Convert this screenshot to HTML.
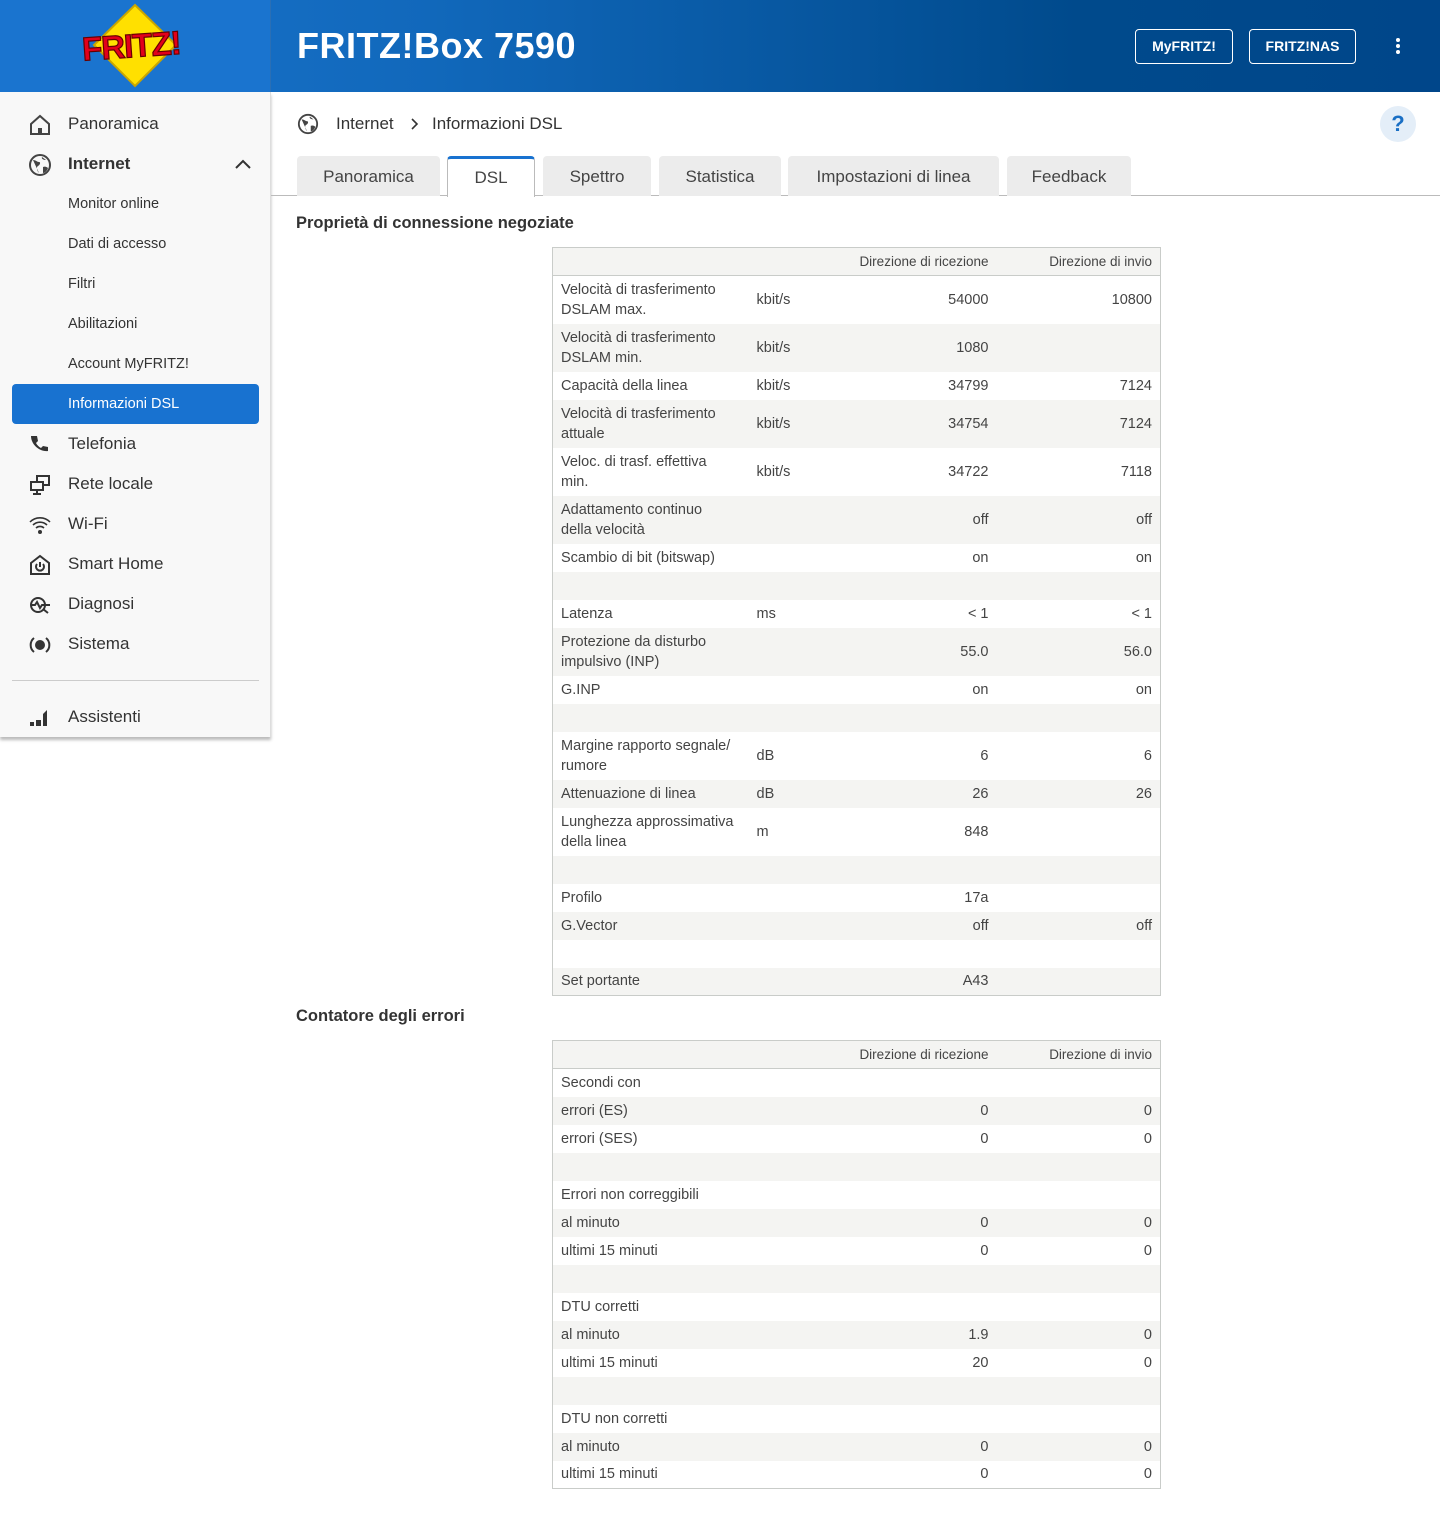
<!DOCTYPE html>
<html><head><meta charset="utf-8"><style>
*{box-sizing:border-box;margin:0;padding:0}
body{width:1440px;height:1514px;position:relative;font-family:"Liberation Sans",sans-serif;color:#444;background:#fff;overflow:hidden}
.hdr{position:absolute;left:0;top:0;width:1440px;height:92px;background:linear-gradient(90deg,#1a74cd 0%,#1168bb 30%,#004a8c 75%,#00468a 100%)}
.logo{position:absolute;left:0;top:0;width:271px;height:92px;background:#1a74cf;border-right:1px solid #2a6fb5}
.title{position:absolute;left:297px;top:25px;color:#fff;font-size:36px;font-weight:bold;letter-spacing:.5px}
.btn{position:absolute;top:29px;height:35px;border:1px solid #fff;border-radius:4px;color:#fff;font-size:14px;font-weight:bold;text-align:center;line-height:33px}
.side{position:absolute;left:0;top:92px;width:271px;height:645px;background:#f8f8f8;border-right:1px solid #ddd;box-shadow:0 3px 3px #bbb}
.ni{position:absolute;left:68px;font-size:17px;color:#333}
.sub{position:absolute;left:68px;font-size:14.5px;color:#333}
.ico{position:absolute;left:28px;width:24px;height:24px}
.tab{position:absolute;top:156px;height:40px;background:#ececec;border-radius:4px 4px 0 0;font-size:17px;color:#444;text-align:center;line-height:42px}
h2{position:absolute;left:296px;font-size:16.5px;font-weight:bold;color:#333}
table{position:absolute;left:552px;width:608px;border:1px solid #c9ccc9;border-collapse:collapse;font-size:14.5px;color:#444;table-layout:fixed}
td{padding:0 8px;vertical-align:middle;line-height:20px;white-space:nowrap;overflow:hidden}
tr.h td{height:28px;font-size:13.5px;border-bottom:1px solid #c9ccc9;background:#f4f4f2;line-height:27px}
tr.s td{height:28px}tr.d td{height:48px}
tr:nth-child(odd):not(.h) td{background:#f4f4f2}
td.r{text-align:right}
</style></head><body>
<div class="hdr"></div>
<div class="logo">
<svg width="120" height="92" viewBox="0 0 120 92" style="position:absolute;left:77px;top:0">
<polygon points="58,5 99,45 58,86 17,45" fill="#ffe000" stroke="#c9a500" stroke-width="2"/>
<text x="5" y="57" font-family="Liberation Sans" font-weight="bold" font-size="33" fill="#e2001a" stroke="#600" stroke-width="1.2" transform="rotate(-4 58 45)" letter-spacing="-1">FRITZ!</text>
</svg></div>
<div class="title">FRITZ!Box 7590</div>
<div class="btn" style="left:1135px;width:98px">MyFRITZ!</div>
<div class="btn" style="left:1249px;width:107px">FRITZ!NAS</div>
<div style="position:absolute;left:1396px;top:38px;width:4px">
<div style="width:4px;height:4px;background:#fff;border-radius:2px;margin-bottom:2px"></div><div style="width:4px;height:4px;background:#fff;border-radius:2px;margin-bottom:2px"></div><div style="width:4px;height:4px;background:#fff;border-radius:2px"></div></div>

<div class="side">
<svg class="ico" style="top:21px" viewBox="0 0 24 24"><path d="M3 11L12 3l9 8v10H3z" fill="none" stroke="#444" stroke-width="2"/><rect x="10" y="15" width="4" height="6" fill="#444"/></svg>
<div class="ni" style="top:22px">Panoramica</div>
<svg class="ico" style="top:61px" viewBox="0 0 24 24"><circle cx="12" cy="12" r="10" fill="none" stroke="#444" stroke-width="2"/><path d="M5 7c3 0 4 2 6 2s1 3-1 4-1 5 1 7M14 4c-1 2 2 3 4 3M15 14c2-1 4 0 5 1-1 3-3 5-5 5z" fill="#444"/></svg>
<div class="ni" style="top:62px;font-weight:bold">Internet</div>
<svg style="position:absolute;left:234px;top:66px" width="18" height="12" viewBox="0 0 18 12"><path d="M2 10l7-7 7 7" fill="none" stroke="#333" stroke-width="2"/></svg>
<div class="sub" style="top:104px">Monitor online</div>
<div class="sub" style="top:144px">Dati di accesso</div>
<div class="sub" style="top:184px">Filtri</div>
<div class="sub" style="top:224px">Abilitazioni</div>
<div class="sub" style="top:264px">Account MyFRITZ!</div>
<div style="position:absolute;left:12px;top:292px;width:247px;height:40px;background:#1872d0;border-radius:4px"></div>
<div class="sub" style="top:304px;color:#fff">Informazioni DSL</div>
<svg class="ico" style="top:341px" viewBox="0 0 24 24"><path d="M5 3l4 0 1 5-2 2c1 2 3 4 5 5l2-2 5 1v4c-9 1-17-7-17-15z" fill="#333"/></svg>
<div class="ni" style="top:342px">Telefonia</div>
<svg class="ico" style="top:381px" viewBox="0 0 24 24"><rect x="9" y="3" width="12" height="9" fill="none" stroke="#333" stroke-width="2"/><rect x="3" y="9" width="12" height="8" fill="#f8f8f8" stroke="#333" stroke-width="2"/><path d="M9 17v3M5 21h8" stroke="#333" stroke-width="2"/></svg>
<div class="ni" style="top:382px">Rete locale</div>
<svg class="ico" style="top:421px" viewBox="0 0 24 24"><path d="M2 9a14 14 0 0 1 20 0M5 12a10 10 0 0 1 14 0M8 15a6 6 0 0 1 8 0" fill="none" stroke="#333" stroke-width="1.6"/><circle cx="12" cy="19" r="2" fill="#333"/></svg>
<div class="ni" style="top:422px">Wi-Fi</div>
<svg class="ico" style="top:461px" viewBox="0 0 24 24"><path d="M3 10l9-7 9 7v11H3z" fill="none" stroke="#333" stroke-width="2"/><path d="M9 11a4 4 0 1 0 6 0M12 9v5" fill="none" stroke="#333" stroke-width="2"/></svg>
<div class="ni" style="top:462px">Smart Home</div>
<svg class="ico" style="top:501px" viewBox="0 0 24 24"><circle cx="10" cy="12" r="7" fill="none" stroke="#333" stroke-width="2"/><path d="M3 12h4l2-3 3 6 2-3h8M15 16l5 4" fill="none" stroke="#333" stroke-width="2"/></svg>
<div class="ni" style="top:502px">Diagnosi</div>
<svg class="ico" style="top:541px" viewBox="0 0 24 24"><path d="M6 5a9 9 0 0 0 0 14M18 5a9 9 0 0 1 0 14" fill="none" stroke="#333" stroke-width="2"/><circle cx="12" cy="12" r="5" fill="#333"/></svg>
<div class="ni" style="top:542px">Sistema</div>
<div style="position:absolute;left:12px;top:588px;width:247px;height:1px;background:#ccc"></div>
<svg class="ico" style="top:614px" viewBox="0 0 24 24"><path d="M2 16h4v4H2zM8 14h5v6H8zM15 8l4-4v16h-4z" fill="#333"/></svg>
<div class="ni" style="top:615px">Assistenti</div>
</div>

<svg style="position:absolute;left:297px;top:113px" width="22" height="22" viewBox="0 0 24 24"><circle cx="12" cy="12" r="10" fill="none" stroke="#444" stroke-width="2"/><path d="M5 7c3 0 4 2 6 2s1 3-1 4-1 5 1 7M14 4c-1 2 2 3 4 3M15 14c2-1 4 0 5 1-1 3-3 5-5 5z" fill="#444"/></svg>
<div style="position:absolute;left:336px;top:114px;font-size:17px;color:#333">Internet</div>
<svg style="position:absolute;left:410px;top:118px" width="10" height="12" viewBox="0 0 10 12"><path d="M2 1l5 5-5 5" fill="none" stroke="#333" stroke-width="1.6"/></svg>
<div style="position:absolute;left:432px;top:114px;font-size:17px;color:#333">Informazioni DSL</div>
<div style="position:absolute;left:1380px;top:106px;width:36px;height:36px;border-radius:18px;background:#e4eef8;color:#1a6fc4;font-weight:bold;font-size:22px;text-align:center;line-height:36px">?</div>

<div style="position:absolute;left:271px;top:195px;width:1169px;height:1px;background:#bbb"></div>
<div class="tab" style="left:297px;width:143px">Panoramica</div>
<div class="tab" style="left:447px;width:88px;background:#fff;border:1px solid #bbb;border-bottom:none;border-top:3px solid #1872d0;height:41px;line-height:38px">DSL</div>
<div class="tab" style="left:543px;width:108px">Spettro</div>
<div class="tab" style="left:659px;width:122px">Statistica</div>
<div class="tab" style="left:788px;width:211px">Impostazioni di linea</div>
<div class="tab" style="left:1007px;width:124px">Feedback</div>

<h2 style="top:214px">Proprietà di connessione negoziate</h2>
<table style="top:247px">
<colgroup><col style="width:196px"><col style="width:100px"><col style="width:148px"><col style="width:164px"></colgroup>
<tr class="h"><td></td><td></td><td class="r">Direzione di ricezione</td><td class="r">Direzione di invio</td></tr>
<tr class="d"><td>Velocità di trasferimento<br>DSLAM max.</td><td>kbit/s</td><td class="r">54000</td><td class="r">10800</td></tr>
<tr class="d"><td>Velocità di trasferimento<br>DSLAM min.</td><td>kbit/s</td><td class="r">1080</td><td class="r"></td></tr>
<tr class="s"><td>Capacità della linea</td><td>kbit/s</td><td class="r">34799</td><td class="r">7124</td></tr>
<tr class="d"><td>Velocità di trasferimento<br>attuale</td><td>kbit/s</td><td class="r">34754</td><td class="r">7124</td></tr>
<tr class="d"><td>Veloc. di trasf. effettiva<br>min.</td><td>kbit/s</td><td class="r">34722</td><td class="r">7118</td></tr>
<tr class="d"><td>Adattamento continuo<br>della velocità</td><td></td><td class="r">off</td><td class="r">off</td></tr>
<tr class="s"><td>Scambio di bit (bitswap)</td><td></td><td class="r">on</td><td class="r">on</td></tr>
<tr class="s"><td></td><td></td><td></td><td></td></tr>
<tr class="s"><td>Latenza</td><td>ms</td><td class="r">&lt; 1</td><td class="r">&lt; 1</td></tr>
<tr class="d"><td>Protezione da disturbo<br>impulsivo (INP)</td><td></td><td class="r">55.0</td><td class="r">56.0</td></tr>
<tr class="s"><td>G.INP</td><td></td><td class="r">on</td><td class="r">on</td></tr>
<tr class="s"><td></td><td></td><td></td><td></td></tr>
<tr class="d"><td>Margine rapporto segnale/<br>rumore</td><td>dB</td><td class="r">6</td><td class="r">6</td></tr>
<tr class="s"><td>Attenuazione di linea</td><td>dB</td><td class="r">26</td><td class="r">26</td></tr>
<tr class="d"><td>Lunghezza approssimativa<br>della linea</td><td>m</td><td class="r">848</td><td class="r"></td></tr>
<tr class="s"><td></td><td></td><td></td><td></td></tr>
<tr class="s"><td>Profilo</td><td></td><td class="r">17a</td><td class="r"></td></tr>
<tr class="s"><td>G.Vector</td><td></td><td class="r">off</td><td class="r">off</td></tr>
<tr class="s"><td></td><td></td><td></td><td></td></tr>
<tr class="s"><td>Set portante</td><td></td><td class="r">A43</td><td class="r"></td></tr>
</table>

<h2 style="top:1007px">Contatore degli errori</h2>
<table style="top:1040px">
<colgroup><col style="width:196px"><col style="width:100px"><col style="width:148px"><col style="width:164px"></colgroup>
<tr class="h"><td></td><td></td><td class="r">Direzione di ricezione</td><td class="r">Direzione di invio</td></tr>
<tr class="s"><td>Secondi con</td><td></td><td></td><td></td></tr>
<tr class="s"><td>errori (ES)</td><td></td><td class="r">0</td><td class="r">0</td></tr>
<tr class="s"><td>errori (SES)</td><td></td><td class="r">0</td><td class="r">0</td></tr>
<tr class="s"><td></td><td></td><td></td><td></td></tr>
<tr class="s"><td>Errori non correggibili</td><td></td><td></td><td></td></tr>
<tr class="s"><td>al minuto</td><td></td><td class="r">0</td><td class="r">0</td></tr>
<tr class="s"><td>ultimi 15 minuti</td><td></td><td class="r">0</td><td class="r">0</td></tr>
<tr class="s"><td></td><td></td><td></td><td></td></tr>
<tr class="s"><td>DTU corretti</td><td></td><td></td><td></td></tr>
<tr class="s"><td>al minuto</td><td></td><td class="r">1.9</td><td class="r">0</td></tr>
<tr class="s"><td>ultimi 15 minuti</td><td></td><td class="r">20</td><td class="r">0</td></tr>
<tr class="s"><td></td><td></td><td></td><td></td></tr>
<tr class="s"><td>DTU non corretti</td><td></td><td></td><td></td></tr>
<tr class="s"><td>al minuto</td><td></td><td class="r">0</td><td class="r">0</td></tr>
<tr class="s"><td>ultimi 15 minuti</td><td></td><td class="r">0</td><td class="r">0</td></tr>
</table>
</body></html>
